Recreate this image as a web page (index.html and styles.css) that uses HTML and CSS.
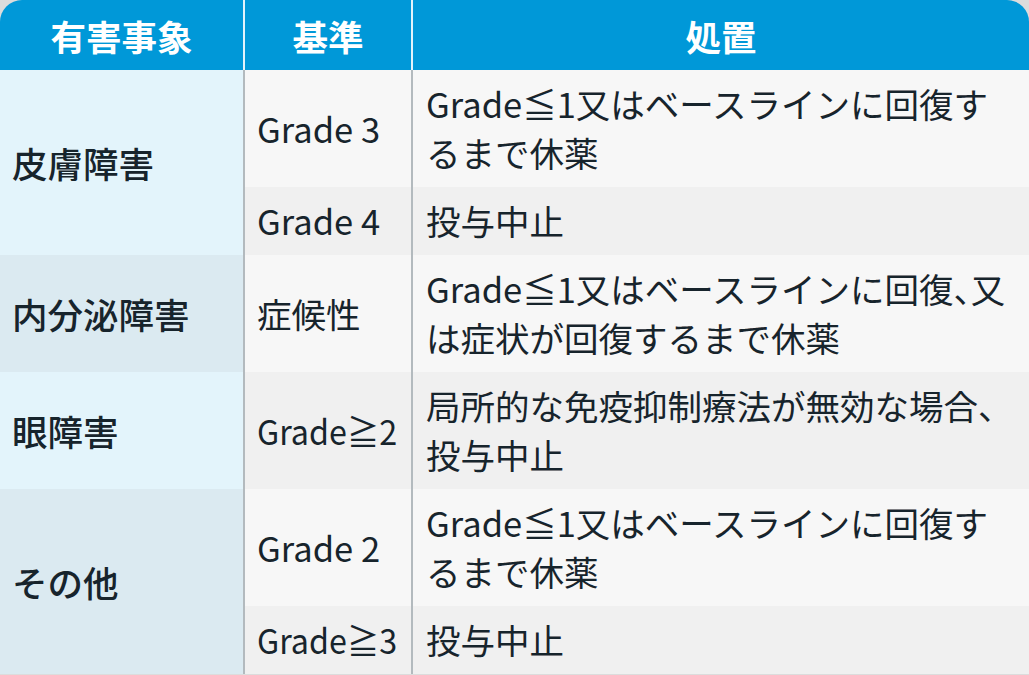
FILE: index.html
```html
<!DOCTYPE html>
<html lang="ja">
<head>
<meta charset="utf-8">
<link rel="stylesheet" href="styles.css">
</head>
<body>
<table class="ae-table">
  <colgroup>
    <col class="c1"><col class="c2"><col class="c3">
  </colgroup>
  <thead>
    <tr>
      <th class="h-first">有害事象</th>
      <th>基準</th>
      <th class="h-last">処置</th>
    </tr>
  </thead>
  <tbody>
    <tr class="odd">
      <td class="event light" rowspan="2">皮膚障害</td>
      <td class="grade">Grade 3</td>
      <td class="action">Grade≦1又はベースラインに回復するまで休薬</td>
    </tr>
    <tr class="even">
      <td class="grade">Grade 4</td>
      <td class="action">投与中止</td>
    </tr>
    <tr class="odd">
      <td class="event dark">内分泌障害</td>
      <td class="grade">症候性</td>
      <td class="action">Grade≦1又はベースラインに回復<span class="punct">、</span>又は症状が回復するまで休薬</td>
    </tr>
    <tr class="even">
      <td class="event light">眼障害</td>
      <td class="grade"><span class="condensed">Grade≧2</span></td>
      <td class="action">局所的な免疫抑制療法が無効な場合、投与中止</td>
    </tr>
    <tr class="odd">
      <td class="event dark" rowspan="2">その他</td>
      <td class="grade">Grade 2</td>
      <td class="action">Grade≦1又はベースラインに回復するまで休薬</td>
    </tr>
    <tr class="even">
      <td class="grade"><span class="condensed">Grade≧3</span></td>
      <td class="action">投与中止</td>
    </tr>
  </tbody>
</table>
</body>
</html>
```

FILE: styles.css
```css
html, body {
  margin: 0;
  padding: 0;
  background: #dcdcdc;
}

.ae-table {
  width: 1029px;
  border-collapse: separate;
  border-spacing: 0;
  table-layout: fixed;
  font-family: "Noto Sans CJK JP", "Noto Sans", sans-serif;
  font-size: 34.5px;
  line-height: 49px;
  color: #17242c;
}

.c1 { width: 243px; }
.c2 { width: 168px; }
.c3 { width: 618px; }

.ae-table th {
  background: #0098d8;
  color: #fff;
  font-weight: 700;
  font-size: 35.5px;
  height: 70px;
  padding: 0 8px;
  box-sizing: border-box;
  text-align: center;
  border-left: 2px solid #e2f3fb;
}

.ae-table th.h-first {
  border-left: none;
  border-top-left-radius: 22px;
}

.ae-table th.h-last {
  border-top-right-radius: 22px;
}

.ae-table td {
  padding: 9px 12px 10px 13px;
  vertical-align: middle;
  text-align: left;
}

.ae-table td.event {
  font-weight: 500;
  font-size: 35.5px;
  padding-left: 12px;
}

.ae-table td.light { background: #e3f4fb; }
.ae-table td.dark { background: #dbeaf1; }

.ae-table td.grade {
  border-left: 2px solid #b3babe;
  white-space: nowrap;
  padding-left: 12px;
  padding-right: 0;
}

.condensed {
  display: inline-block;
  transform: scaleX(0.935);
  transform-origin: left center;
}

.ae-table td.action {
  border-left: 2px solid #b3babe;
  padding-right: 10px;
}

.punct {
  font-feature-settings: "halt";
}

.odd td.grade, .odd td.action { background: #f7f7f7; }
.even td.grade, .even td.action { background: #f0f0f0; }
```
